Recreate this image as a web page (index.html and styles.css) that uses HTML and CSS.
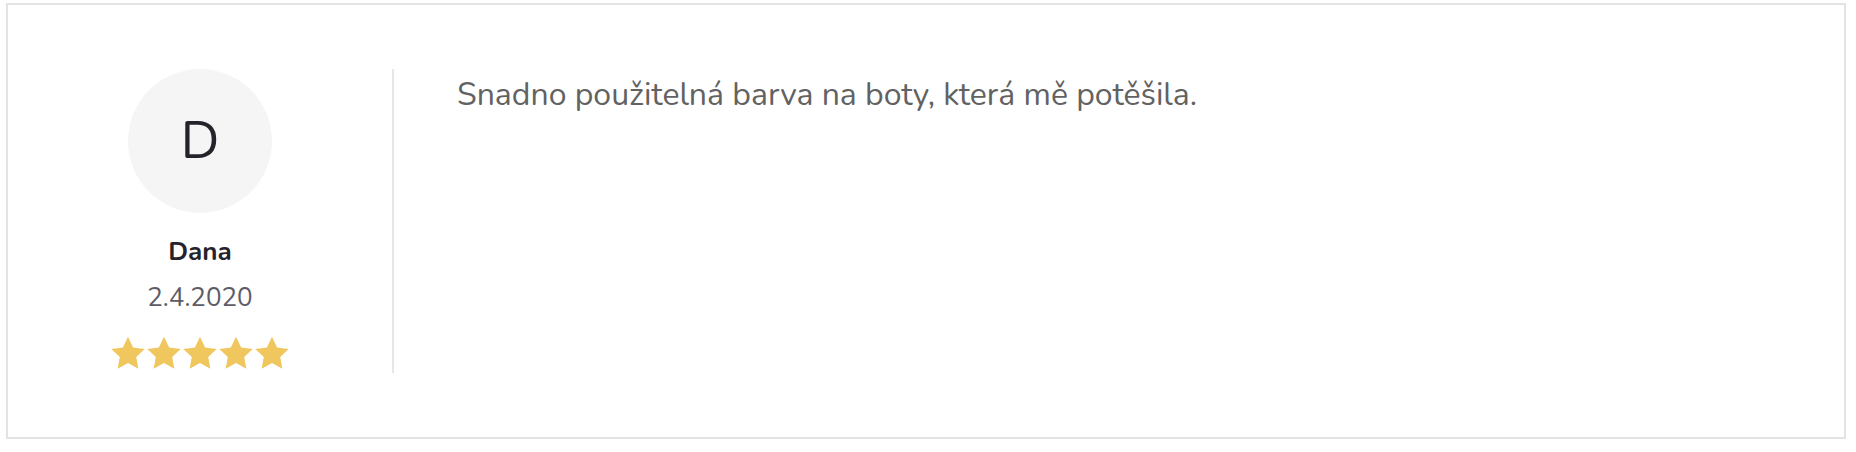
FILE: index.html
```html
<!DOCTYPE html>
<html lang="cs">
<head>
<meta charset="utf-8">
<title>Recenze</title>
<link rel="stylesheet" href="styles.css">
</head>
<body>
<div class="review">
  <div class="author">
    <div class="avatar">D</div>
    <div class="name">Dana</div>
    <div class="date">2.4.2020</div>
    <div class="stars">
      <svg class="star" viewBox="0 0 24 24"><path d="M12 .6l3.6 7.6 8.2 1-6 5.7 1.5 8.2L12 19.1l-7.3 4 1.5-8.2-6-5.7 8.2-1z"/></svg>
      <svg class="star" viewBox="0 0 24 24"><path d="M12 .6l3.6 7.6 8.2 1-6 5.7 1.5 8.2L12 19.1l-7.3 4 1.5-8.2-6-5.7 8.2-1z"/></svg>
      <svg class="star" viewBox="0 0 24 24"><path d="M12 .6l3.6 7.6 8.2 1-6 5.7 1.5 8.2L12 19.1l-7.3 4 1.5-8.2-6-5.7 8.2-1z"/></svg>
      <svg class="star" viewBox="0 0 24 24"><path d="M12 .6l3.6 7.6 8.2 1-6 5.7 1.5 8.2L12 19.1l-7.3 4 1.5-8.2-6-5.7 8.2-1z"/></svg>
      <svg class="star" viewBox="0 0 24 24"><path d="M12 .6l3.6 7.6 8.2 1-6 5.7 1.5 8.2L12 19.1l-7.3 4 1.5-8.2-6-5.7 8.2-1z"/></svg>
    </div>
  </div>
  <div class="content">
    <p class="text">Snadno použitelná barva na boty, která mě potěšila.</p>
  </div>
</div>
</body>
</html>
```

FILE: styles.css
```css
html, body {
  margin: 0;
  padding: 0;
  background: #ffffff;
}
body {
  padding: 3px 10px 13px 6px;
  font-family: "Nunito", "Open Sans", "Noto Sans", sans-serif;
}
.review {
  display: flex;
  align-items: flex-start;
  border: 2px solid #e3e3e3;
  padding: 64px 0 64px 0;
  height: 304px;
}
.author {
  width: 386px;
  height: 304px;
  display: flex;
  flex-direction: column;
  align-items: center;
  border-right: 2px solid #e6e6e6;
  box-sizing: border-box;
}
.avatar {
  width: 144px;
  height: 144px;
  border-radius: 50%;
  background: #f5f5f5;
  color: #24232b;
  display: flex;
  align-items: center;
  justify-content: center;
  font-size: 52px;
  line-height: 1;
  font-weight: 400;
}
.name {
  margin-top: 21px;
  font-size: 26px;
  line-height: 36px;
  font-weight: 700;
  color: #24232b;
}
.date {
  margin-top: 10px;
  font-size: 26px;
  line-height: 36px;
  color: #5d5c66;
}
.stars {
  margin-top: 20px;
  display: flex;
  gap: 2px;
}
.star {
  width: 34px;
  height: 34px;
  fill: #efc75e;
  display: block;
}
.content {
  padding-left: 63px;
  padding-top: 5px;
}
.text {
  margin: 0;
  font-size: 32px;
  line-height: 42px;
  color: #626262;
}
```
